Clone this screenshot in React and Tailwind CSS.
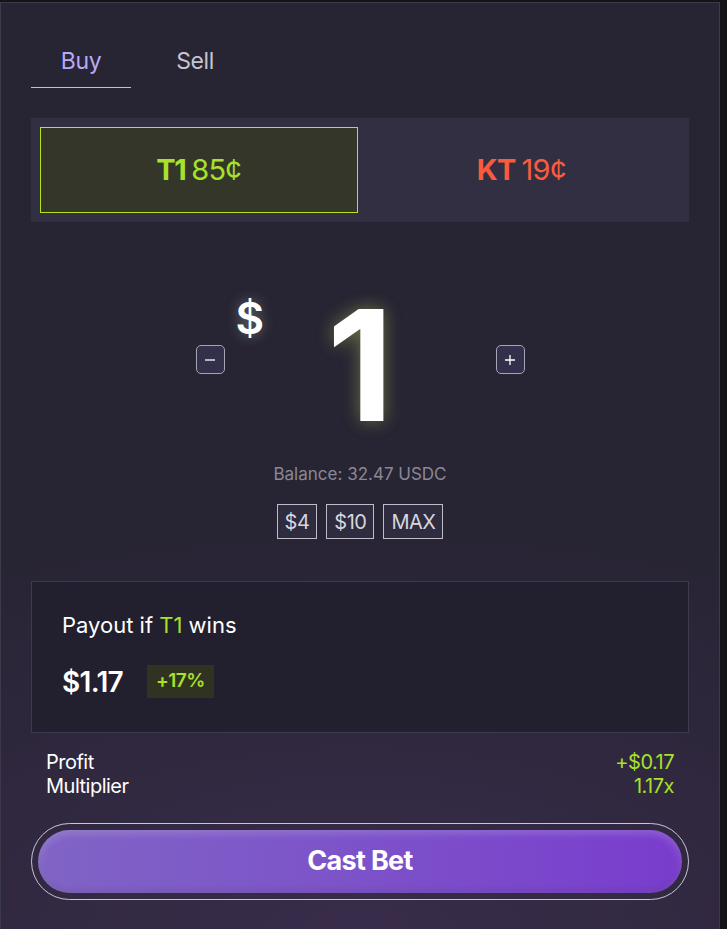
import React, { useState } from 'react';

// Bet slip panel
const App = () => {
  const [side, setSide] = useState('buy');
  const [pick, setPick] = useState('T1');
  const [amount, setAmount] = useState(1);

  const tabClass = (active) =>
    `w-[100px] pb-[9px] text-[23px] leading-[34px] border-b ${
      active ? 'text-[#b7aaf7] border-[#c4b8f5]' : 'text-[#c6c3cf] border-transparent'
    }`;

  return (
    <div className="min-h-screen bg-[#141318] pt-[2px] font-['Inter',sans-serif] tracking-tight">
      <div className="w-[720px] min-h-[927px] border-x border-t border-[#3b394a] px-[30px] pt-[41px] pb-[28px] bg-[radial-gradient(ellipse_120%_45%_at_50%_100%,#382c4a_0%,#272433_100%)]">
        {/* tabs */}
        <div className="flex gap-[14px]">
          <button className={tabClass(side === 'buy')} onClick={() => setSide('buy')}>Buy</button>
          <button className={tabClass(side === 'sell')} onClick={() => setSide('sell')}>Sell</button>
        </div>

        {/* outcome picker */}
        <div className="mt-[30px] grid grid-cols-2 gap-[5px] p-[9px] bg-[#322f43]">
          <button
            onClick={() => setPick('T1')}
            className={`h-[86px] flex items-center justify-center text-[29px] text-[#a8e12b] border ${
              pick === 'T1' ? 'bg-[#34362a] border-[#b4e41d]' : 'border-transparent'
            }`}
          >
            <span className="font-bold tracking-tighter">T1</span>
            <span className="ml-[6px] tracking-tight">85¢</span>
          </button>
          <button
            onClick={() => setPick('KT')}
            className={`h-[86px] flex items-center justify-center text-[29px] text-[#fb5b3d] border ${
              pick === 'KT' ? 'bg-[#3a2a2a] border-[#fb5b3d]' : 'border-transparent'
            }`}
          >
            <span className="font-bold tracking-tight">KT</span>
            <span className="ml-[6px] tracking-tight">19¢</span>
          </button>
        </div>

        {/* amount */}
        <div className="mt-[66px] flex items-center justify-center">
          <button
            onClick={() => setAmount(Math.max(0, amount - 1))}
            className="mb-[11px] w-[29px] h-[29px] rounded-[5px] border border-[#a7a4b3] bg-[#32304a] text-white flex items-center justify-center"
          >
            <svg width="12" height="12" viewBox="0 0 12 12"><path d="M1 6h10" stroke="white" strokeWidth="1.3" /></svg>
          </button>
          <div className="relative w-[271px] flex justify-center">
            <span className="absolute left-[11px] top-[8px] text-[44px] leading-none font-semibold text-white [text-shadow:0_0_14px_rgba(230,240,200,0.35)]">$</span>
            <span className="text-[154px] leading-none font-bold text-white [text-shadow:0_0_18px_rgba(190,215,90,0.45)]">{amount}</span>
          </div>
          <button
            onClick={() => setAmount(amount + 1)}
            className="mb-[11px] w-[29px] h-[29px] rounded-[5px] border border-[#a7a4b3] bg-[#32304a] text-white flex items-center justify-center"
          >
            <svg width="12" height="12" viewBox="0 0 12 12"><path d="M1 6h10M6 1v10" stroke="white" strokeWidth="1.3" /></svg>
          </button>
        </div>

        <p className="mt-[20px] text-center text-[17px] leading-[25px] text-[#8b8895] tracking-normal">Balance: 32.47 USDC</p>

        <div className="mt-[17px] flex justify-center gap-[9px]">
          {['$4', '$10', 'MAX'].map((q) => (
            <button
              key={q}
              className="h-[35px] px-[7px] border border-[#bfbcc8] bg-[#2e2c3e] text-[20px] text-[#d8d5df] tracking-tight"
            >
              {q}
            </button>
          ))}
        </div>

        {/* payout card */}
        <div className="mt-[42px] border border-[#3d3a50] bg-[#221f2e] px-[30px] pt-[30px] pb-[34px]">
          <p className="text-[22px] leading-[26px] text-white tracking-normal">
            Payout if <span className="text-[#a8e12b]">T1</span> wins
          </p>
          <div className="mt-[27px] flex items-center gap-[24px]">
            <span className="text-[28px] leading-none font-semibold text-white tracking-tight">$1.17</span>
            <span className="h-[33px] px-[9px] flex items-center bg-[#303322] text-[19px] font-semibold text-[#a8e12b] tracking-tight">+17%</span>
          </div>
        </div>

        {/* stats */}
        <div className="mt-[17px] px-[15px] text-[20px] leading-[24px] tracking-tight">
          <div className="flex justify-between">
            <span className="text-white">Profit</span>
            <span className="text-[#a8e12b]">+$0.17</span>
          </div>
          <div className="flex justify-between">
            <span className="text-white">Multiplier</span>
            <span className="text-[#a8e12b]">1.17x</span>
          </div>
        </div>

        {/* cta */}
        <div className="mt-[25px] rounded-full border border-[#c9c4d6] p-[6px]">
          <button className="w-full h-[63px] rounded-full bg-gradient-to-r from-[#8064c5] to-[#793ccd] shadow-[inset_0_3px_8px_rgba(255,255,255,0.22),inset_0_-2px_6px_rgba(0,0,0,0.15)] text-white text-[27px] font-bold tracking-tight">
            Cast Bet
          </button>
        </div>
      </div>
    </div>
  );
};

export default App;
